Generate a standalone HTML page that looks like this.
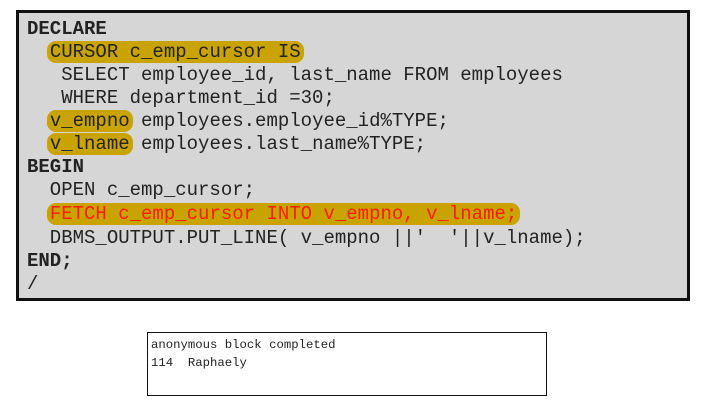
<!DOCTYPE html>
<html><head><style>
body{margin:0;width:705px;height:406px;background:#fff;position:relative;overflow:hidden}
#box{position:absolute;left:16px;top:10px;width:668px;height:285px;border:3px solid #111;background:#d6d6d6}
.l{position:absolute;left:8px;font-family:"Courier New","Liberation Mono",monospace;font-size:19px;line-height:22px;white-space:pre;color:#222}
.h{background:#c9a300;border-radius:9px;padding:0 3px;margin:0 -3px}
.r{color:#ff1a00}
#out{position:absolute;left:147px;top:332px;width:398px;height:62px;border:1px solid #111;background:#fff}
.o{position:absolute;left:3px;font-family:"Courier New","Liberation Mono",monospace;font-size:12.3px;white-space:pre;color:#222}
</style></head><body>
<div id="box">
<div class="l" style="top:5px"><b>DECLARE</b></div>
<div class="l" style="top:28px">  <span class="h">CURSOR c_emp_cursor IS</span></div>
<div class="l" style="top:51px">   SELECT employee_id, last_name FROM employees</div>
<div class="l" style="top:74px">   WHERE department_id =30;</div>
<div class="l" style="top:97px">  <span class="h">v_empno</span> employees.employee_id%TYPE;</div>
<div class="l" style="top:120px">  <span class="h">v_lname</span> employees.last_name%TYPE;</div>
<div class="l" style="top:143px"><b>BEGIN</b></div>
<div class="l" style="top:166px">  OPEN c_emp_cursor;</div>
<div class="l" style="top:190px">  <span class="h r">FETCH c_emp_cursor INTO v_empno, v_lname;</span></div>
<div class="l" style="top:214px">  DBMS_OUTPUT.PUT_LINE( v_empno ||'  '||v_lname);</div>
<div class="l" style="top:237px"><b>END;</b></div>
<div class="l" style="top:260px">/</div>
</div>
<div id="out">
<div class="o" style="top:5px">anonymous block completed</div>
<div class="o" style="top:23px">114  Raphaely</div>
</div>
</body></html>
